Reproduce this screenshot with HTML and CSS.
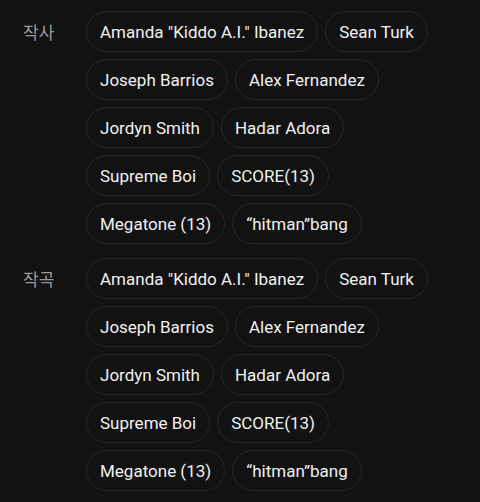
FILE: index.html
```html
<!DOCTYPE html>
<html lang="ko">
<head>
    <meta charset="UTF-8">
    <meta name="viewport" content="width=device-width, initial-scale=1.0">
    <title>크레딧</title>
    <link rel="stylesheet" href="styles.css">
</head>
<body>
    <div class="credits">
        <div class="credit-group">
            <div class="credit-label">작사</div>
            <div class="tag-list">
                <span class="tag">Amanda "Kiddo A.I." Ibanez</span>
                <span class="tag">Sean Turk</span>
                <span class="tag">Joseph Barrios</span>
                <span class="tag">Alex Fernandez</span>
                <span class="tag">Jordyn Smith</span>
                <span class="tag">Hadar Adora</span>
                <span class="tag">Supreme Boi</span>
                <span class="tag">SCORE(13)</span>
                <span class="tag">Megatone (13)</span>
                <span class="tag">“hitman”bang</span>
            </div>
        </div>
        <div class="credit-group">
            <div class="credit-label">작곡</div>
            <div class="tag-list">
                <span class="tag">Amanda "Kiddo A.I." Ibanez</span>
                <span class="tag">Sean Turk</span>
                <span class="tag">Joseph Barrios</span>
                <span class="tag">Alex Fernandez</span>
                <span class="tag">Jordyn Smith</span>
                <span class="tag">Hadar Adora</span>
                <span class="tag">Supreme Boi</span>
                <span class="tag">SCORE(13)</span>
                <span class="tag">Megatone (13)</span>
                <span class="tag">“hitman”bang</span>
            </div>
        </div>
    </div>
</body>
</html>
```

FILE: styles.css
```css
body {
    margin: 0;
    background-color: #121212;
    font-family: Roboto, "Noto Sans CJK KR", sans-serif;
    color: #f0f0f0;
}
.credits {
    padding-top: 11px;
}
.credit-group {
    display: flex;
    align-items: flex-start;
    margin-bottom: 14px;
}
.credit-label {
    width: 63px;
    flex-shrink: 0;
    padding-left: 23px;
    line-height: 41px;
    font-family: "Noto Sans CJK KR", sans-serif;
    font-size: 17px;
    color: #9a9a9a;
}
.tag-list {
    display: flex;
    flex-wrap: wrap;
    gap: 7px;
    padding-right: 20px;
}
.tag {
    display: inline-flex;
    align-items: center;
    height: 41px;
    box-sizing: border-box;
    padding: 0 13px;
    border: 1px solid #282828;
    border-radius: 21px;
    font-size: 17px;
    white-space: nowrap;
}
```
